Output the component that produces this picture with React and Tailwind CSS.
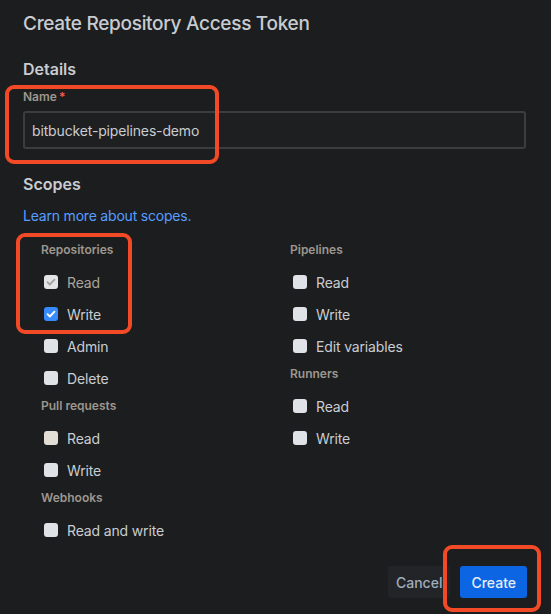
import React from "react";

const Check = ({ color }) => (
  <svg viewBox="0 0 14 14" className="w-[14px] h-[14px]">
    <path d="M3.5 7.2l2.3 2.3 4.7-4.8" fill="none" stroke={color} strokeWidth="1.8" strokeLinecap="round" strokeLinejoin="round" />
  </svg>
);

const Box = ({ state }) => {
  if (state === "checked")
    return (
      <span className="w-[14px] h-[14px] rounded-[3px] bg-[#388bff] flex items-center justify-center">
        <Check color="#ffffff" />
      </span>
    );
  if (state === "disabled")
    return (
      <span className="w-[14px] h-[14px] rounded-[3px] bg-[#e4e4e4] flex items-center justify-center">
        <Check color="#a3a3a3" />
      </span>
    );
  return <span className={`w-[14px] h-[14px] rounded-[3px] ${state === "hover" ? "bg-[#e2ded6]" : "bg-[#dfe2e7]"}`} />;
};

const Row = ({ label, state, muted }) => (
  <div className="h-[32px] flex items-center pl-[3px] gap-[9px]">
    <Box state={state} />
    <span className={`text-[14px] tracking-[-0.15px] ${muted ? "text-[#a9a49c]" : "text-[#c9cdd1]"}`}>{label}</span>
  </div>
);

const Group = ({ title, first, children }) => (
  <div className={first ? "" : "mt-[4px]"}>
    <div className="h-[16px] leading-[16px] text-[12px] font-semibold text-[#9d978e] mb-[8px]">{title}</div>
    {children}
  </div>
);

export default function App() {
  return (
    <div
      className="relative w-[551px] h-[614px] bg-[#1c1d1f] overflow-hidden pl-[23px] pr-[24px]"
      style={{ fontFamily: "Inter, 'Noto Sans', sans-serif" }}
    >
      <h1 className="pt-[12px] h-[36px] leading-[24px] text-[19px] font-medium text-[#c8ccd1] tracking-[-0.3px]">
        Create Repository Access Token
      </h1>
      <h2 className="mt-[23px] leading-[20px] text-[16px] font-semibold text-[#c8ccd1]">Details</h2>
      <div className="mt-[10px] leading-[16px] text-[12px] font-semibold text-[#9d978e]">
        Name<span className="text-[#f15b50] ml-[2px]">*</span>
      </div>
      <div className="mt-[6px] mr-[1px] h-[38px] rounded-[3px] border-2 border-[#3a3e3f] bg-[#1e1f21] flex items-center px-[7px] text-[14px] tracking-[-0.15px] text-[#c9cdd1]">
        bitbucket-pipelines-demo
      </div>
      <h2 className="mt-[25px] leading-[20px] text-[16px] font-semibold text-[#c8ccd1]">Scopes</h2>
      <div className="mt-[12px] leading-[20px] text-[14px] tracking-[-0.2px] text-[#579dff]">Learn more about scopes.</div>

      <div className="mt-[16px] pl-[18px] grid grid-cols-[249px_1fr]">
        <div>
          <Group title="Repositories" first>
            <Row label="Read" state="disabled" muted />
            <Row label="Write" state="checked" />
            <Row label="Admin" />
            <Row label="Delete" />
          </Group>
          <Group title="Pull requests">
            <Row label="Read" state="hover" />
            <Row label="Write" />
          </Group>
          <Group title="Webhooks">
            <Row label="Read and write" />
          </Group>
        </div>
        <div>
          <Group title="Pipelines" first>
            <Row label="Read" />
            <Row label="Write" />
            <Row label="Edit variables" />
          </Group>
          <Group title="Runners">
            <Row label="Read" />
            <Row label="Write" />
          </Group>
        </div>
      </div>

      <div className="mt-[20px] flex justify-end gap-[10px]">
        <button className="h-[32px] px-[8px] rounded-[3px] bg-[#222427] text-[14px] font-medium text-[#9fadbc]">Cancel</button>
        <button className="h-[32px] px-[11px] rounded-[3px] bg-[#0c66e4] text-[14px] font-medium text-[#e6ecf3]">Create</button>
      </div>

      <div className="absolute left-[5px] top-[85px] w-[214px] h-[79px] border-4 border-[#f24a26] rounded-[9px]" />
      <div className="absolute left-[16px] top-[233px] w-[116px] h-[101px] border-4 border-[#f24a26] rounded-[9px]" />
      <div className="absolute left-[443px] top-[545px] w-[98px] h-[67px] border-4 border-[#f24a26] rounded-[9px]" />
    </div>
  );
}
